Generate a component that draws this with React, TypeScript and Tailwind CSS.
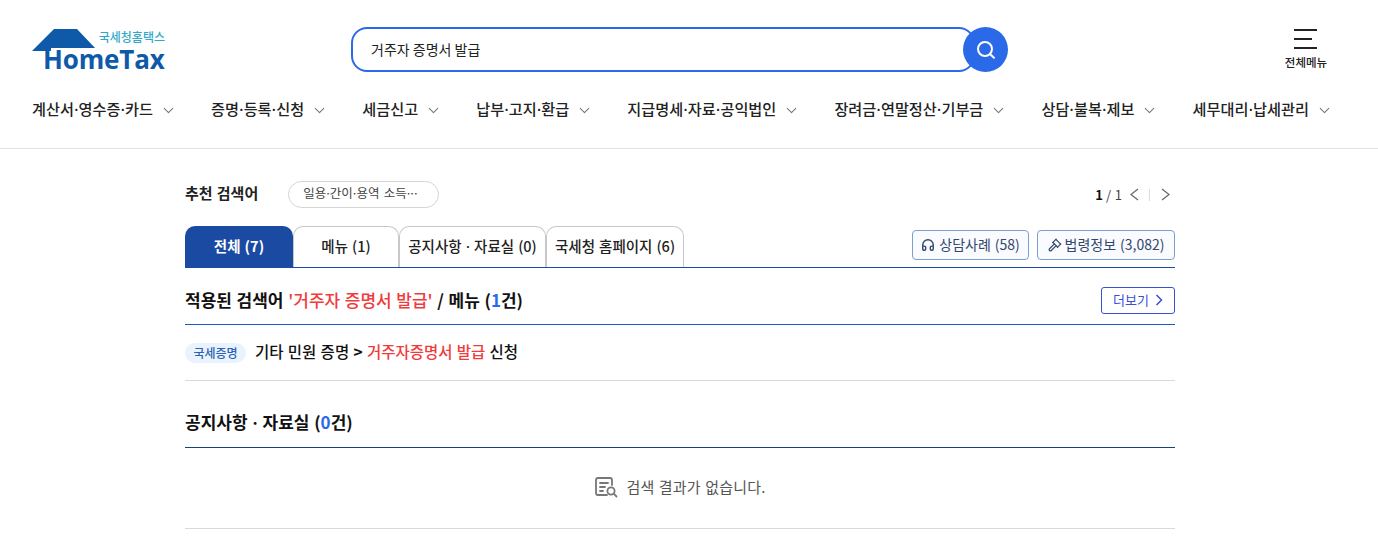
import type { ReactNode } from "react";
import { ChevronDown, Headphones, Gavel } from "lucide-react";

const NAV_ITEMS = [
  "계산서·영수증·카드",
  "증명·등록·신청",
  "세금신고",
  "납부·고지·환급",
  "지급명세·자료·공익법인",
  "장려금·연말정산·기부금",
  "상담·불복·제보",
  "세무대리·납세관리",
];

const Dot = () => <span className="font-['Inter',sans-serif]">·</span>;

const Logo = () => (
  <div className="relative w-[133px] h-[44px]">
    <svg className="absolute left-0 top-[1px]" width="64" height="24" viewBox="0 0 64 24">
      <path d="M0 23 L22 1 H45 L63 20 H19 V23 Z" fill="#0f5aa8" />
    </svg>
    <span className="absolute right-0 top-[3px] text-[12px] leading-[14px] font-medium text-[#2fa9c9] whitespace-nowrap">국세청홈택스</span>
    <span className="absolute left-[11px] top-[22px] font-['Open_Sans',sans-serif] font-bold text-[26px] leading-[21px] tracking-[-0.15px] text-[#0f5aa8]">
      HomeTax
    </span>
  </div>
);

const SearchBar = () => (
  <div className="relative w-[657px] h-[45px] ml-[186px]">
    <div className="w-[624px] h-[45px] rounded-[16px] border-2 border-[#2a6ae9] flex items-center pl-[18px] text-[14px] text-[#222] [word-spacing:0]">
      거주자 증명서 발급
    </div>
    <button className="absolute right-0 top-0 w-[45px] h-[45px] rounded-full bg-[#2a6ae9] flex items-center justify-center">
      <svg width="22" height="22" viewBox="0 0 22 22" fill="none" stroke="#fff" strokeWidth="2" strokeLinecap="round">
        <circle cx="10" cy="10" r="7" />
        <path d="M15.2 15.2 L19 18.8" />
      </svg>
    </button>
  </div>
);

const AllMenu = () => (
  <div className="ml-auto w-[44px] mr-[50px] flex flex-col items-center pt-[2px]">
    <div className="w-[23px] h-[20px] mr-[1px] flex flex-col justify-between items-start">
      <span className="block w-[23px] h-[2px] bg-[#222]" />
      <span className="block w-[18px] h-[2px] bg-[#222]" />
      <span className="block w-[23px] h-[2px] bg-[#222]" />
    </div>
    <span className="mt-[5px] text-[11.5px] leading-[16px] font-medium text-[#222] whitespace-nowrap">전체메뉴</span>
  </div>
);

const Tab = ({ children, active, w }: { children: ReactNode; active?: boolean; w: string }) => (
  <div
    className={
      active
        ? `${w} h-[41px] pb-[2px] rounded-t-[10px] bg-[#1b4aa3] text-white font-bold text-[14.5px] flex items-center justify-center`
        : `${w} h-[41px] pb-[2px] rounded-t-[10px] border border-b-0 border-[#c8c8c8] text-[#222] text-[14.5px] font-medium flex items-center justify-center`
    }
  >
    {children}
  </div>
);

const Pager = () => (
  <div className="ml-auto flex items-center text-[13px] text-[#444] pr-[5px]">
    <b className="text-[#111]">1</b>
    <span className="ml-[3px]">/ 1</span>
    <svg className="ml-[8px]" width="9" height="13" viewBox="0 0 9 13" fill="none" stroke="#666" strokeWidth="1.2">
      <path d="M8 1 L1 6.5 L8 12" />
    </svg>
    <span className="ml-[10px] mr-[11px] w-px h-[12px] bg-[#ddd]" />
    <svg width="9" height="13" viewBox="0 0 9 13" fill="none" stroke="#666" strokeWidth="1.2">
      <path d="M1 1 L8 6.5 L1 12" />
    </svg>
  </div>
);

export default function App() {
  return (
    <div className="font-['Noto_Sans_CJK_KR',sans-serif] [word-spacing:0.05em] w-[1378px] h-[543px] overflow-hidden bg-white text-[#111]">
      <header className="h-[149px] border-b border-[#e3e3e3]">
        <div className="flex items-start pl-[32px] pt-[27px] h-[72px]">
          <Logo />
          <SearchBar />
          <AllMenu />
        </div>
        <nav className="flex items-center justify-between pl-[32px] pr-[45px] h-[22px] mt-[27px] font-['Inter','Noto_Sans_CJK_KR',sans-serif]">
          {NAV_ITEMS.map((item) => (
            <div key={item} className="flex items-center gap-[7px]">
              <span className="text-[15.2px] leading-[22px] font-medium text-[#222] whitespace-nowrap">{item}</span>
              <ChevronDown size={17} strokeWidth={1.5} className="text-[#777]" />
            </div>
          ))}
        </nav>
      </header>

      <main className="w-[990px] ml-[185px]">
        <div className="flex items-center h-[27px] mt-[32px]">
          <span className="mb-[2px] text-[15px] font-bold text-[#222]">추천 검색어</span>
          <span className="ml-[30px] w-[151px] h-[27px] rounded-full border border-[#d5d5d5] flex items-center pl-[14px] text-[12.5px] text-[#444] font-['Inter','Noto_Sans_CJK_KR',sans-serif]">
            일용·간이·용역 소득···
          </span>
          <Pager />
        </div>

        <div className="flex items-end h-[42px] mt-[18px] border-b border-[#1b4aa3]">
          <Tab active w="w-[108px]">전체 (7)</Tab>
          <Tab w="w-[106px]">메뉴 (1)</Tab>
          <Tab w="w-[147px]">
            <span>
              공지사항 <Dot /> 자료실 (0)
            </span>
          </Tab>
          <Tab w="w-[138px]">국세청 홈페이지 (6)</Tab>
          <div className="ml-auto flex gap-[8px] self-start mt-[4px]">
            <div className="h-[30px] w-[117px] pb-[2px] rounded-[4px] border border-[#7d9fd0] bg-[#f9fbff] flex items-center justify-center gap-[4px] text-[14px] text-[#33476b]">
              <Headphones size={14} strokeWidth={2.4} className="mt-[2px]" />
              상담사례 (58)
            </div>
            <div className="h-[30px] w-[138px] pb-[2px] rounded-[4px] border border-[#7d9fd0] bg-[#f9fbff] flex items-center justify-center gap-[3px] text-[14px] text-[#33476b]">
              <Gavel size={14} strokeWidth={2} className="mt-[2px]" />
              법령정보 (3,082)
            </div>
          </div>
        </div>

        <div className="flex items-center justify-between h-[57px] pt-[8px] border-b border-[#1f58c4]">
          <h2 className="text-[17px] font-bold text-[#111]">
            적용된 검색어 <span className="text-[#f03c3c] font-medium">'거주자 증명서 발급'</span> / 메뉴 (
            <span className="text-[#2a6ae9]">1</span>건)
          </h2>
          <div className="w-[74px] h-[27px] pb-[1px] rounded-[3px] border border-[#3a4fd8] flex items-center justify-center gap-[6px] text-[13px] text-[#3a4fd8]">
            더보기
            <svg width="8" height="12" viewBox="0 0 8 12" fill="none" stroke="currentColor" strokeWidth="1.5">
              <path d="M1.5 1 L6.5 6 L1.5 11" />
            </svg>
          </div>
        </div>

        <div className="flex items-center h-[56px] border-b border-[#d9d9d9]">
          <span className="w-[61px] h-[20px] rounded-full bg-[#e9f3fe] flex items-center justify-center text-[12px] font-medium text-[#2c62b4]">
            국세증명
          </span>
          <p className="ml-[9px] mb-[2px] text-[15.5px] font-medium text-[#111]">
            기타 민원 증명 <b>&gt;</b> <span className="text-[#f03c3c]">거주자증명서 발급</span> 신청
          </p>
        </div>

        <h2 className="flex items-center h-[67px] pt-[18px] border-b border-[#1b3f7d] text-[17px] font-bold text-[#111]">
          <span>
            공지사항 <Dot /> 자료실 (<span className="text-[#2a6ae9]">0</span>건)
          </span>
        </h2>

        <div className="flex items-center justify-center gap-[8px] h-[81px] pb-[2px] border-b border-[#d9d9d9] text-[15px] tracking-[0.2px] text-[#555]">
          <svg width="24" height="22" viewBox="0 0 24 22" fill="none" stroke="#777" strokeWidth="1.8" strokeLinecap="round">
            <path d="M13 19 H4 Q2 19 2 17 V4 Q2 2 4 2 H16 Q18 2 18 4 V9" />
            <path d="M6 7 H14 M6 11 H11 M6 15 H9" />
            <circle cx="17" cy="15" r="3.6" />
            <path d="M19.7 17.7 L22.5 20.5" />
          </svg>
          검색 결과가 없습니다.
        </div>
      </main>
    </div>
  );
}
